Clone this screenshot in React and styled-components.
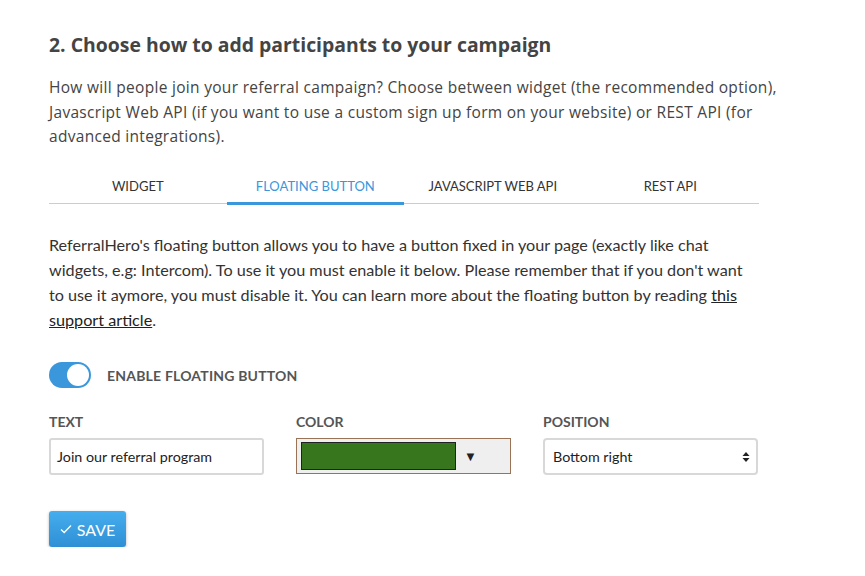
import React, { useState } from 'react';
import styled, { createGlobalStyle } from 'styled-components';

const GlobalStyle = createGlobalStyle`
  body {
    margin: 0;
    background: #fff;
    font-family: Lato, "Open Sans", sans-serif;
    color: #444;
  }
`;

const Page = styled.div`
  padding: 31px 0 0 49px;
  width: 760px;
`;

const Heading = styled.h2`
  margin: 0 0 17px;
  font-family: "Open Sans", sans-serif;
  font-size: 19.4px;
  font-weight: 700;
  color: #444;
`;

const Intro = styled.p`
  margin: 0 0 20px;
  width: 745px;
  font-family: "Open Sans", sans-serif;
  font-size: 15.5px;
  letter-spacing: 0.3px;
  line-height: 24.7px;
  color: #444;
`;

const Para = styled.p`
  margin: 0 0 13px;
  width: 705px;
  font-size: 16.2px;
  line-height: 25px;
  color: #333;
  a {
    color: #222;
    text-decoration: underline;
  }
`;

const TabBar = styled.div`
  display: grid;
  grid-template-columns: repeat(4, 1fr);
  width: 710px;
  border-bottom: 1px solid #ccc;
  margin-bottom: 28px;
`;

const Tab = styled.div`
  text-align: center;
  font-size: 13px;
  padding: 9px 0 8px;
  color: ${(p) => (p.$active ? '#3a97dc' : '#333')};
  border-bottom: 3px solid ${(p) => (p.$active ? '#3a97dc' : 'transparent')};
  margin-bottom: -2px;
  text-transform: uppercase;
`;

const ToggleRow = styled.div`
  display: flex;
  align-items: center;
  gap: 16px;
  margin: 30px 0 25px;
`;

const Switch = styled.div`
  width: 42px;
  height: 26px;
  border-radius: 13px;
  background: #3a97dc;
  position: relative;
  &::after {
    content: '';
    position: absolute;
    right: 2px;
    top: 2px;
    width: 22px;
    height: 22px;
    border-radius: 50%;
    background: #fff;
  }
`;

const ToggleLabel = styled.span`
  font-size: 14px;
  font-weight: 700;
  color: #555;
  letter-spacing: 0.2px;
`;

const FormRow = styled.div`
  display: grid;
  grid-template-columns: repeat(3, 215px);
  gap: 32px;
  width: 710px;
`;

const Field = styled.div`
  display: flex;
  flex-direction: column;
  gap: 8px;
`;

const Label = styled.label`
  font-size: 14px;
  font-weight: 700;
  color: #555;
`;

const TextInput = styled.div`
  height: 37px;
  box-sizing: border-box;
  border: 2px solid #d8d8d8;
  border-radius: 3px;
  padding: 0 6px;
  display: flex;
  align-items: center;
  font-size: 14.3px;
  color: #222;
`;

const ColorBox = styled.div`
  height: 36px;
  box-sizing: border-box;
  border: 1px solid #9a7256;
  background: #efefef;
  display: flex;
  align-items: center;
  padding: 0 4px;
  gap: 8px;
  font-size: 13px;
  color: #222;
`;

const Swatch = styled.div`
  width: 155px;
  height: 28px;
  box-sizing: border-box;
  background: ${(p) => p.$color};
  border: 1px solid #222;
`;

const Select = styled.div`
  height: 37px;
  box-sizing: border-box;
  border: 2px solid #d8d8d8;
  border-radius: 4px;
  padding: 0 6px 0 8px;
  display: flex;
  align-items: center;
  justify-content: space-between;
  font-size: 14.3px;
  color: #222;
`;

const SaveButton = styled.button`
  margin-top: 36px;
  width: 77px;
  height: 36px;
  border: none;
  border-radius: 3px;
  background: linear-gradient(#45aeee, #2f8fd5);
  box-shadow: 0 1px 3px rgba(0, 0, 0, 0.3);
  color: #fff;
  font-family: Lato, sans-serif;
  font-size: 16px;
  display: flex;
  align-items: center;
  justify-content: center;
  gap: 5px;
`;

const tabs = ['Widget', 'Floating button', 'Javascript Web API', 'REST API'];

export default function App() {
  const [active, setActive] = useState(1);
  return (
    <Page>
      <GlobalStyle />
      <Heading>2. Choose how to add participants to your campaign</Heading>
      <Intro>
        How will people join your referral campaign? Choose between widget (the recommended option),
        Javascript Web API (if you want to use a custom sign up form on your website) or REST API (for
        advanced integrations).
      </Intro>
      <TabBar>
        {tabs.map((t, i) => (
          <Tab key={t} $active={i === active} onClick={() => setActive(i)}>
            {t}
          </Tab>
        ))}
      </TabBar>
      <Para>
        ReferralHero's floating button allows you to have a button fixed in your page (exactly like chat
        widgets, e.g: Intercom). To use it you must enable it below. Please remember that if you don't want
        to use it aymore, you must disable it. You can learn more about the floating button by reading{' '}
        <a href="#">this support article</a>.
      </Para>
      <ToggleRow>
        <Switch />
        <ToggleLabel>ENABLE FLOATING BUTTON</ToggleLabel>
      </ToggleRow>
      <FormRow>
        <Field>
          <Label>TEXT</Label>
          <TextInput>Join our referral program</TextInput>
        </Field>
        <Field>
          <Label>COLOR</Label>
          <ColorBox>
            <Swatch $color="#38761d" />
            <span>▼</span>
          </ColorBox>
        </Field>
        <Field>
          <Label>POSITION</Label>
          <Select>
            <span>Bottom right</span>
            <svg width="8" height="12" viewBox="0 0 8 12">
              <path d="M4 1 L7.5 5 H0.5 Z M4 11 L7.5 7 H0.5 Z" fill="#222" />
            </svg>
          </Select>
        </Field>
      </FormRow>
      <SaveButton>
        <svg width="12" height="10" viewBox="0 0 12 10">
          <path d="M1 5.5 L4.2 8.5 L11 1.5" stroke="#fff" strokeWidth="1.3" fill="none" />
        </svg>
        SAVE
      </SaveButton>
    </Page>
  );
}
